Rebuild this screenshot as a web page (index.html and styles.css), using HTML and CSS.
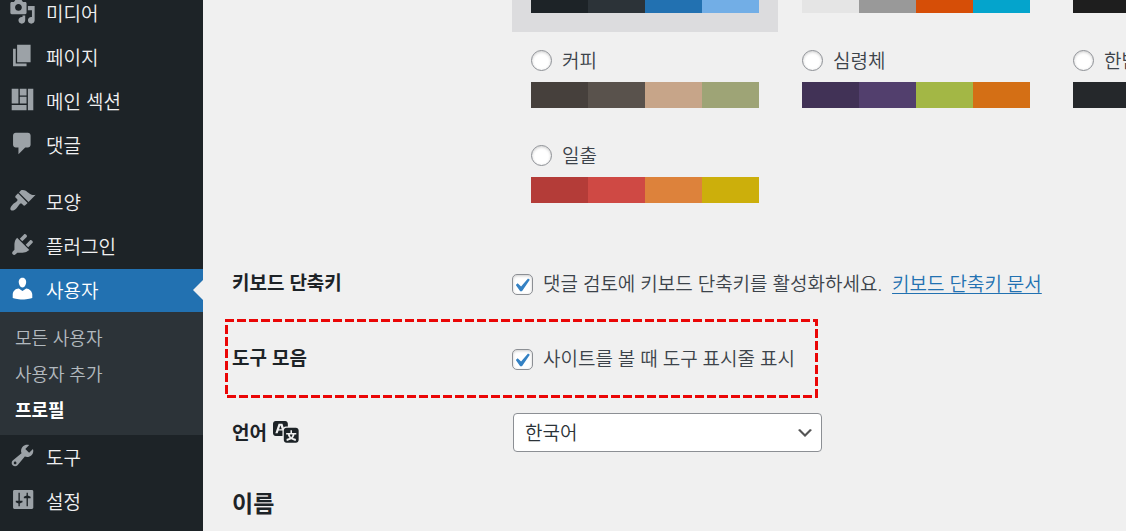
FILE: index.html
```html
<!DOCTYPE html>
<html lang="ko">
<head>
    <meta charset="UTF-8">
    <meta name="viewport" content="width=device-width, initial-scale=1.0">
    <title>프로필</title>
    <link rel="stylesheet" href="styles.css">
</head>
<body>
    <nav class="sidebar">
        <ul class="menu">
            <li>
                <a href="#" class="menu-link">
                    <svg class="icon" viewBox="0 0 20 20"><path d="M13 11V4c0-.55-.45-1-1-1h-1.67L9 1H5L3.67 3H2c-.55 0-1 .45-1 1v7c0 .55.45 1 1 1h10c.55 0 1-.45 1-1zM7 4.5c1.38 0 2.5 1.12 2.5 2.5S8.38 9.5 7 9.5 4.5 8.38 4.5 7 5.62 4.5 7 4.5zM14 6h5v10.5c0 1.38-1.12 2.5-2.5 2.5S14 17.88 14 16.5s1.12-2.5 2.5-2.5c.17 0 .34.02.5.05V9h-3V6zm-4 8.05V13h2v3.5c0 1.38-1.12 2.5-2.5 2.5S7 17.88 7 16.5 8.12 14 9.5 14c.17 0 .34.02.5.05z"/></svg>
                    미디어
                </a>
            </li>
            <li>
                <a href="#" class="menu-link">
                    <svg class="icon" viewBox="0 0 20 20"><path d="M6 15V2h10v13H6zm-1 1h8v2H3V5h2v11z"/></svg>
                    페이지
                </a>
            </li>
            <li>
                <a href="#" class="menu-link">
                    <svg class="icon" viewBox="0 0 20 20"><path d="M2 2h5v11H2V2zm6 0h5v5H8V2zm6 0h4v16h-4V2zM8 8h5v5H8V8zm-6 6h11v4H2v-4z"/></svg>
                    메인 섹션
                </a>
            </li>
            <li>
                <a href="#" class="menu-link">
                    <svg class="icon" viewBox="0 0 20 20"><path d="M5 2h9c1.1 0 2 .9 2 2v7c0 1.1-.9 2-2 2h-2l-5 5v-5H5c-1.1 0-2-.9-2-2V4c0-1.1.9-2 2-2z"/></svg>
                    댓글
                </a>
            </li>
            <li class="separator"></li>
            <li>
                <a href="#" class="menu-link">
                    <svg class="icon" viewBox="0 0 20 20"><path d="M14.48 11.06L7.41 3.99l1.5-1.5c.5-.56 2.3-.47 3.51.32 1.21.8 1.43 1.28 2.91 2.1 1.18.64 2.45 1.26 4.45.85zm-.71.71L6.7 4.7 4.93 6.47c-.39.39-.39 1.02 0 1.41l1.06 1.06c.39.39.39 1.03 0 1.42-.6.6-1.43 1.11-2.21 1.69-.35.26-.7.53-1.01.84C1.43 14.23.4 16.08 1.4 17.07c.99 1 2.84-.03 4.18-1.36.31-.31.58-.66.85-1.02.57-.78 1.08-1.61 1.69-2.21.39-.39 1.02-.39 1.41 0l1.06 1.06c.39.39 1.02.39 1.41 0z"/></svg>
                    모양
                </a>
            </li>
            <li>
                <a href="#" class="menu-link">
                    <svg class="icon" viewBox="0 0 20 20"><path d="M13.11 4.36L9.87 7.6 8 5.73l3.24-3.24c.35-.34 1.05-.2 1.56.32.52.51.66 1.21.31 1.55zm-8 1.77l.91-1.12 9.01 9.01-1.19.84c-.71.71-2.63 1.16-3.82 1.16H6.14L4.9 17.26c-.59.59-1.54.59-2.12 0-.59-.58-.59-1.53 0-2.12l1.24-1.24v-3.88c0-1.13.4-3.19 1.09-3.89zm7.26 3.97l3.24-3.24c.34-.35 1.04-.21 1.55.31.52.51.66 1.21.31 1.55l-3.24 3.25z"/></svg>
                    플러그인
                </a>
            </li>
            <li>
                <a href="#" class="menu-link current">
                    <svg class="icon" viewBox="0 0 20 20"><path d="M10 9.25c-2.27 0-2.73-3.44-2.73-3.44C7 4.02 7.82 2 9.97 2c2.16 0 2.98 2.02 2.71 3.81 0 0-.41 3.44-2.68 3.44zm0 2.57L12.72 10c2.39 0 4.52 2.33 4.52 4.53v2.49s-3.65 1.13-7.24 1.13c-3.65 0-7.24-1.13-7.24-1.13v-2.49c0-2.25 1.94-4.48 4.47-4.48z"/></svg>
                    사용자
                </a>
                <ul class="submenu">
                    <li><a href="#">모든 사용자</a></li>
                    <li><a href="#">사용자 추가</a></li>
                    <li><a href="#" class="active">프로필</a></li>
                </ul>
            </li>
            <li>
                <a href="#" class="menu-link">
                    <svg class="icon" viewBox="0 0 20 20"><path d="M16.68 9.77c-1.34 1.34-3.3 1.67-4.95.99l-5.41 6.52c-.99.99-2.59.99-3.58 0s-.99-2.59 0-3.57l6.52-5.42c-.68-1.65-.35-3.61.99-4.95 1.28-1.28 3.12-1.62 4.72-1.06l-2.89 2.89 2.82 2.82 2.86-2.87c.53 1.58.18 3.39-1.08 4.65zM3.81 16.21c.4.39 1.04.39 1.43 0 .4-.4.4-1.04 0-1.43-.39-.4-1.03-.4-1.43 0-.39.39-.39 1.03 0 1.43z"/></svg>
                    도구
                </a>
            </li>
            <li>
                <a href="#" class="menu-link">
                    <svg class="icon" viewBox="0 0 20 20"><path fill-rule="evenodd" d="M4 3h13c.55 0 1 .45 1 1v12c0 .55-.45 1-1 1H4c-.55 0-1-.45-1-1V4c0-.55.45-1 1-1zM7 5h1v6h2v1l-2 1v2H7v-2l-2-1v-1h2zM13 15h1V9h2V8l-2-1V5h-1v2l-2 1v1h2z"/></svg>
                    설정
                </a>
            </li>
        </ul>
    </nav>

    <main class="content">
        <form class="profile-form">
            <div class="color-schemes">
                <div class="scheme selected">
                    <label><input type="radio" name="scheme" aria-label="기본" checked></label>
                    <div class="palette"><span class="fresh-1"></span><span class="fresh-2"></span><span class="fresh-3"></span><span class="fresh-4"></span></div>
                </div>
                <div class="scheme">
                    <label><input type="radio" name="scheme" aria-label="밝음"></label>
                    <div class="palette"><span class="light-1"></span><span class="light-2"></span><span class="light-3"></span><span class="light-4"></span></div>
                </div>
                <div class="scheme">
                    <label><input type="radio" name="scheme" aria-label="모던"></label>
                    <div class="palette"><span class="modern-1"></span><span class="modern-2"></span><span class="modern-3"></span><span class="modern-4"></span></div>
                </div>
                <div class="scheme">
                    <label><input type="radio" name="scheme"> 커피</label>
                    <div class="palette"><span class="coffee-1"></span><span class="coffee-2"></span><span class="coffee-3"></span><span class="coffee-4"></span></div>
                </div>
                <div class="scheme">
                    <label><input type="radio" name="scheme"> 심령체</label>
                    <div class="palette"><span class="ecto-1"></span><span class="ecto-2"></span><span class="ecto-3"></span><span class="ecto-4"></span></div>
                </div>
                <div class="scheme">
                    <label><input type="radio" name="scheme"> 한밤</label>
                    <div class="palette"><span class="midnight-1"></span><span class="midnight-2"></span><span class="midnight-3"></span><span class="midnight-4"></span></div>
                </div>
                <div class="scheme">
                    <label><input type="radio" name="scheme"> 일출</label>
                    <div class="palette"><span class="sunrise-1"></span><span class="sunrise-2"></span><span class="sunrise-3"></span><span class="sunrise-4"></span></div>
                </div>
            </div>

            <div class="form-row">
                <div class="row-title">키보드 단축키</div>
                <div class="row-field">
                    <input type="checkbox" id="shortcuts" checked>
                    <label for="shortcuts">댓글 검토에 키보드 단축키를 활성화하세요.</label>
                    <a href="#">키보드 단축키 문서</a>
                </div>
            </div>

            <div class="form-row">
                <div class="row-title">도구 모음</div>
                <div class="row-field">
                    <input type="checkbox" id="toolbar" checked>
                    <label for="toolbar">사이트를 볼 때 도구 표시줄 표시</label>
                </div>
                <svg class="highlight" viewBox="0 0 593 79"><rect x="1.5" y="1.5" width="590" height="76"/></svg>
            </div>

            <div class="form-row">
                <label class="row-title" for="locale">언어
                    <svg class="icon" viewBox="0 0 20 20"><path d="M11 7H9.49c-.63 0-1.25.3-1.59.7L7 5H4.13l-2.39 7h1.69l.74-2H7v4H2c-1.1 0-2-.9-2-2V5c0-1.1.9-2 2-2h7c1.1 0 2 .9 2 2v2zM6.51 9H4.49l1-2.93zM10 8h7c1.1 0 2 .9 2 2v7c0 1.1-.9 2-2 2h-7c-1.1 0-2-.9-2-2v-7c0-1.1.9-2 2-2zm7.25 5v-1.08h-3.17V9.75h-1.16v2.17H9.75V13h1.28c.11.85.56 1.85 1.28 2.62-.87.36-1.89.62-2.31.62-.01.02.22.97.2 1.46.84 0 2.21-.5 3.28-1.15 1.09.65 2.48 1.15 3.34 1.15-.02-.49.2-1.44.2-1.46-.43 0-1.49-.27-2.38-.63.7-.77 1.14-1.77 1.25-2.61h1.36zm-3.81 1.93c-.5-.46-.85-1.13-1.01-1.93h2.09c-.17.8-.51 1.47-1 1.93l-.04.03s-.03-.02-.04-.03z"/></svg>
                </label>
                <div class="row-field">
                    <select id="locale">
                        <option>한국어</option>
                    </select>
                </div>
            </div>

            <h2>이름</h2>
        </form>
    </main>
</body>
</html>
```
FILE: styles.css
```css
* {
    box-sizing: border-box;
}

body {
    margin: 0;
    display: flex;
    height: 100vh;
    overflow: hidden;
    background-color: #f0f0f0;
    color: #3c434a;
    font-family: "Noto Sans", "Noto Sans CJK KR", sans-serif;
    font-size: 19px;
    font-weight: 350;
    line-height: 28px;
}

ul {
    list-style: none;
    margin: 0;
    padding: 0;
}

.icon {
    width: 27px;
    height: 27px;
    flex-shrink: 0;
    fill: currentColor;
}

/* Sidebar */
.sidebar {
    width: 203px;
    flex-shrink: 0;
    background-color: #1d2327;
}

.menu {
    display: flex;
    flex-direction: column;
    gap: 1px;
    margin-top: -8px;
}

.menu-link {
    display: flex;
    align-items: center;
    gap: 10px;
    height: 43px;
    padding-left: 9px;
    color: #f0f0f1;
    text-decoration: none;
}

.menu-link .icon {
    color: #9ca2a7;
    margin-bottom: 4px;
}

.separator {
    height: 12px;
}

.menu-link.current {
    position: relative;
    background-color: #2271b1;
    color: #fff;
}

.menu-link.current .icon {
    color: #fff;
}

.menu-link.current::after {
    content: '';
    position: absolute;
    right: 0;
    top: 11px;
    border: 10px solid transparent;
    border-left: 0;
    border-right-color: #f0f0f0;
}

.submenu {
    padding: 8px 0 7px;
    background-color: #2c3338;
}

.submenu a {
    display: block;
    padding: 0 15px;
    font-size: 18px;
    line-height: 36px;
    color: rgba(240, 246, 252, 0.7);
    text-decoration: none;
}

.submenu a.active {
    color: #fff;
    font-weight: 600;
}

/* Content */
.content {
    flex: 1;
    min-width: 0;
    padding-left: 29px;
    overflow: hidden;
}

.profile-form {
    margin-top: -63px;
}

.color-schemes {
    display: grid;
    grid-template-columns: repeat(3, 266px);
    column-gap: 5px;
    margin: 0 0 24px 280px;
}

.scheme {
    padding: 18px 19px 19px;
}

.scheme.selected {
    background-color: #dcdcde;
}

.scheme label {
    display: flex;
    align-items: center;
    gap: 10px;
    height: 21px;
    margin-bottom: 11px;
}

.palette {
    display: flex;
    height: 26px;
}

.palette span {
    flex: 1;
}

.fresh-1 { background: #1d2327; }
.fresh-2 { background: #2c3338; }
.fresh-3 { background: #2271b1; }
.fresh-4 { background: #72aee6; }
.light-1 { background: #e5e5e5; }
.light-2 { background: #999; }
.light-3 { background: #d64e07; }
.light-4 { background: #04a4cc; }
.modern-1 { background: #1e1e1e; }
.modern-2 { background: #3858e9; }
.modern-3 { background: #33f078; }
.modern-4 { background: #7b90ff; }
.coffee-1 { background: #46403c; }
.coffee-2 { background: #59524c; }
.coffee-3 { background: #c7a589; }
.coffee-4 { background: #9ea476; }
.ecto-1 { background: #413256; }
.ecto-2 { background: #523f6d; }
.ecto-3 { background: #a3b745; }
.ecto-4 { background: #d46f15; }
.midnight-1 { background: #25282b; }
.midnight-2 { background: #363b3f; }
.midnight-3 { background: #69a8bb; }
.midnight-4 { background: #e14d43; }
.sunrise-1 { background: #b43c38; }
.sunrise-2 { background: #cf4944; }
.sunrise-3 { background: #dd823b; }
.sunrise-4 { background: #ccaf0b; }

input[type="radio"],
input[type="checkbox"] {
    appearance: none;
    width: 21px;
    height: 21px;
    margin: 0;
    flex-shrink: 0;
    border: 1px solid #8c8f94;
    border-radius: 50%;
    background-color: #fff;
    box-shadow: inset 0 1px 3px rgba(0, 0, 0, 0.2);
}

input[type="checkbox"] {
    margin-top: 2px;
    border-radius: 5px;
}

input[type="checkbox"]:checked {
    background-image: url("data:image/svg+xml,%3Csvg xmlns='http://www.w3.org/2000/svg' viewBox='0 0 20 20'%3E%3Cpath d='M14.83 4.89l1.34.94-5.81 8.38H9.02L5.78 9.67l1.34-1.25 2.57 2.4z' fill='%233582c4'/%3E%3C/svg%3E");
    background-size: 27px 27px;
    background-position: -5px -3px;
}

.form-row {
    position: relative;
    display: grid;
    grid-template-columns: 280px 1fr;
    align-items: center;
    height: 75px;
}

.row-title {
    display: flex;
    align-items: center;
    gap: 6px;
    padding-bottom: 2px;
    color: #1d2327;
    font-weight: 600;
}

.row-title .icon {
    margin-bottom: 4px;
}

.row-field {
    display: flex;
    align-items: center;
    gap: 10px;
    white-space: nowrap;
}

.row-field a {
    color: #2271b1;
    text-decoration-thickness: 1px;
    text-underline-offset: 2px;
}

/* Dashed frame round the toolbar option */
.highlight {
    position: absolute;
    top: -2px;
    left: -7px;
    width: 593px;
    height: 79px;
    pointer-events: none;
}

.highlight rect {
    fill: none;
    stroke: #ea0606;
    stroke-width: 3;
    stroke-dasharray: 9 3;
    stroke-dashoffset: 1.5;
}

select {
    appearance: none;
    width: 309px;
    height: 39px;
    margin: 0 0 2px 1px;
    padding: 0 32px 0 11px;
    border: 1px solid #8c8f94;
    border-radius: 4px;
    background: #fff url("data:image/svg+xml,%3Csvg xmlns='http://www.w3.org/2000/svg' viewBox='0 0 20 20'%3E%3Cpath d='M5 6l5 5 5-5 2 1-7 7-7-7 2-1z' fill='%23555'/%3E%3C/svg%3E") no-repeat right 6px center;
    background-size: 20px 20px;
    color: #2c3338;
    font: inherit;
}

h2 {
    margin: 16px 0 0;
    color: #1d2327;
    font-size: 23px;
    font-weight: 600;
    line-height: 32px;
}
```
